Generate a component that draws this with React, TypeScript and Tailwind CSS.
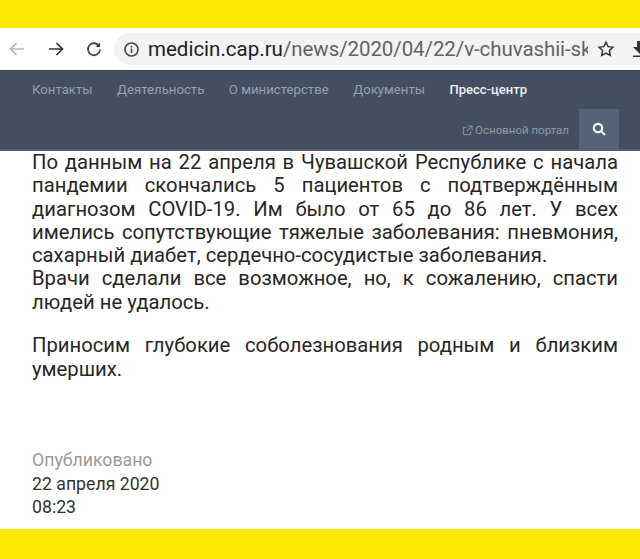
import React from "react";

const navItems = ["Контакты", "Деятельность", "О министерстве", "Документы"];

export default function App() {
  return (
    <div className="w-[640px] h-[559px] flex flex-col overflow-hidden bg-white font-['Roboto',sans-serif]">
      <div className="h-[28px] shrink-0 bg-[#ffe900]" />
      <div className="h-[42px] shrink-0 flex items-center bg-white overflow-hidden">
        <svg className="ml-[8px] shrink-0" width="18" height="18" viewBox="0 0 18 18" fill="none" stroke="#b4b8bb" strokeWidth="1.7"><path d="M16 9H2.5M8.5 3L2.5 9l6 6" /></svg>
        <svg className="ml-[21px] shrink-0" width="18" height="18" viewBox="0 0 18 18" fill="none" stroke="#333" strokeWidth="1.7"><path d="M2 9h13.5M9.5 3l6 6-6 6" /></svg>
        <svg className="ml-[20px] shrink-0" width="18" height="18" viewBox="0 0 18 18" fill="none" stroke="#444" strokeWidth="1.8"><path d="M14.2 6.2A6 6 0 1 0 15 9.5" /><path d="M15 2.5v4.500h-4.500" fill="#444" stroke="none" /></svg>
        <div className="ml-[11px] w-[526px] h-[32px] shrink-0 flex items-center rounded-l-full bg-[#f1f3f4] overflow-hidden">
          <svg className="ml-[9px] shrink-0" width="17" height="17" viewBox="0 0 17 17" fill="none" stroke="#444" strokeWidth="1.6"><circle cx="8.5" cy="8.5" r="6.5" /><path d="M8.500 7.500v4.500M8.500 4.800v1.600" /></svg>
          <div className="ml-[8px] w-[440px] shrink-0 text-[20.500px] leading-[32px] whitespace-nowrap overflow-hidden text-[#5f6368]">
            <span className="text-[#202124]">medicin.cap.ru</span><span className="tracking-[-0.08px]">/news/2020/04/22/v-chuvashii-sk</span>
          </div>
          <svg className="ml-[9px] shrink-0" width="18" height="18" viewBox="0 0 24 24" fill="none" stroke="#333" strokeWidth="2"><path d="M12 3l2.800 5.900 6.400.8-4.700 4.400 1.200 6.400L12 17.400l-5.700 3.100 1.200-6.400L2.800 9.700l6.400-.8z" /></svg>
          <svg className="ml-[16px] shrink-0" width="18" height="18" viewBox="0 0 18 18" fill="#333"><path d="M6 1h6v6h4l-7 7-7-7h4zM2 15.500h14V17H2z" /></svg>
        </div>
      </div>
      <div className="h-[81px] shrink-0 flex flex-col bg-[#434f60] border-t border-[#39424f] border-b-2 border-b-[#535e6e]">
        <div className="h-[39px] flex items-center pl-[32px] gap-[24.500px] text-[13.200px]">
          {navItems.map((t) => (
            <span key={t} className="text-[#96a0ae] whitespace-nowrap">{t}</span>
          ))}
          <span className="text-[13px] text-[#eef0f3] font-medium whitespace-nowrap">Пресс-центр</span>
        </div>
        <div className="mt-auto h-[41px] flex justify-end items-stretch pr-[21px]">
          <div className="flex items-center gap-[2px] text-[#8f9aa9] text-[11.500px] mr-[10px] pt-[3px]">
            <svg width="11" height="11" viewBox="0 0 12 12" fill="none" stroke="#8f9aa9" strokeWidth="1"><path d="M9.500 7v3.500h-8v-8H5M7 1.200h4v4M11 1.200L5.500 6.700" /></svg>
            <span className="whitespace-nowrap">Основной портал</span>
          </div>
          <div className="w-[40px] flex items-center justify-center bg-[#566376]">
            <svg width="14" height="14" viewBox="0 0 14 14" fill="none" stroke="#f3f5f7" strokeWidth="2.200"><circle cx="6" cy="6" r="4.200" /><path d="M9 9l4 4" /></svg>
          </div>
        </div>
      </div>
      <main className="flex-1 pl-[32px] pr-[22px] text-[#272727] text-[20.250px] leading-[23.300px]">
        <div>
          {[
            "По данным на 22 апреля в Чувашской Республике с начала",
            "пандемии скончались 5 пациентов с подтверждённым",
            "диагнозом COVID-19. Им было от 65 до 86 лет. У всех",
            "имелись сопутствующие тяжелые заболевания: пневмония,",
          ].map((l) => (
            <div key={l} className="[text-align:justify] [text-align-last:justify]">{l}</div>
          ))}
          <div className="whitespace-nowrap">сахарный диабет, сердечно-сосудистые заболевания.</div>
          <div className="[text-align:justify] [text-align-last:justify]">Врачи сделали все возможное, но, к сожалению, спасти</div>
          <div>людей не удалось.</div>
        </div>
        <div className="mt-[19px] leading-[24px]">
          <div className="[text-align:justify] [text-align-last:justify]">Приносим глубокие соболезнования родным и близким</div>
          <div>умерших.</div>
        </div>
        <div className="mt-[68px] text-[17.700px] leading-[23.500px]">
          <div className="text-[#9a9a9a]">Опубликовано</div>
          <div className="text-[#333]">22 апреля 2020</div>
          <div className="text-[#333]">08:23</div>
        </div>
      </main>
      <div className="h-[30px] shrink-0 bg-[#ffe900]" />
    </div>
  );
}
